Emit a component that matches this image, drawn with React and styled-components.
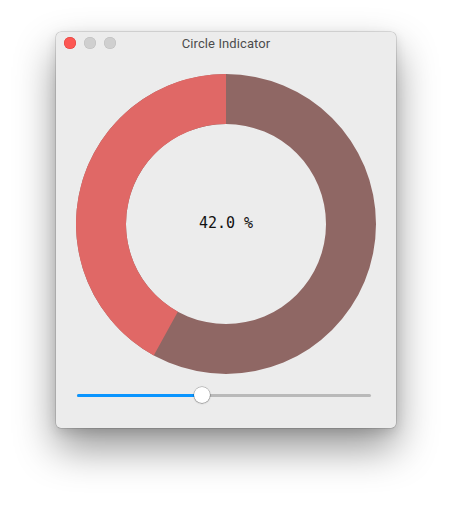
import React, { useState } from "react";
import styled, { createGlobalStyle } from "styled-components";

const Global = createGlobalStyle`
  html, body { margin: 0; padding: 0; background: #ffffff; }
  body { font-family: "Roboto", "Liberation Sans", sans-serif; }
`;

const Page = styled.div`
  width: 452px;
  height: 508px;
  padding: 32px 0 0 56px;
  box-sizing: border-box;
  display: flex;
  align-items: flex-start;
`;

const Window = styled.div`
  width: 340px;
  height: 396px;
  background: #ececec;
  border-radius: 5px;
  box-shadow: 0 0 0 0.5px rgba(0, 0, 0, 0.22), 0 20px 40px rgba(0, 0, 0, 0.42),
    0 4px 12px rgba(0, 0, 0, 0.12);
  display: flex;
  flex-direction: column;
  overflow: hidden;
`;

const TitleBar = styled.div`
  height: 22px;
  flex: none;
  display: grid;
  grid-template-columns: 1fr auto 1fr;
  align-items: center;
  padding: 0 8px;
`;

const Lights = styled.div`
  display: flex;
  gap: 8px;
`;

const Light = styled.span`
  width: 12px;
  height: 12px;
  border-radius: 50%;
  background: ${(p) => p.$color};
  box-shadow: inset 0 0 0 0.5px ${(p) => p.$edge};
`;

const Title = styled.div`
  font-size: 13px;
  color: #4c4c4c;
  letter-spacing: 0.1px;
  padding-top: 1px;
`;

const Content = styled.div`
  flex: 1;
  display: flex;
  flex-direction: column;
  align-items: center;
  padding-top: 20px;
`;

const Gauge = styled.div`
  width: 300px;
  height: 300px;
  position: relative;
  display: flex;
  align-items: center;
  justify-content: center;
`;

const GaugeSvg = styled.svg`
  position: absolute;
  inset: 0;
`;

const Readout = styled.div`
  position: relative;
  font-family: "DejaVu Sans Mono", "Liberation Mono", monospace;
  font-size: 15px;
  color: #111;
  white-space: pre;
  margin-top: -2px;
`;

const SliderRow = styled.div`
  align-self: flex-start;
  margin-left: 21px;
  width: 294px;
  margin-top: 13px;
  height: 16px;
  position: relative;
  display: flex;
  align-items: center;
`;

const Track = styled.div`
  width: 100%;
  height: 3px;
  border-radius: 2px;
  background: #b9b9b9;
  overflow: hidden;
  display: flex;
`;

const Fill = styled.div`
  height: 100%;
  background: #0a95ff;
`;

const Thumb = styled.div`
  position: absolute;
  top: 0;
  width: 16px;
  height: 16px;
  margin-left: -8px;
  border-radius: 50%;
  background: #ffffff;
  box-shadow: 0 0 0 0.5px rgba(0, 0, 0, 0.3), 0 0.5px 1.5px rgba(0, 0, 0, 0.35);
  box-sizing: border-box;
`;

function sectorPath(value) {
  const t = (value / 100) * 2 * Math.PI;
  const R = 150, r = 100, c = 150;
  const ox = c - R * Math.sin(t), oy = c - R * Math.cos(t);
  const ix = c - r * Math.sin(t), iy = c - r * Math.cos(t);
  const large = value > 50 ? 1 : 0;
  return `M${c} ${c - R} A${R} ${R} 0 ${large} 0 ${ox} ${oy} L${ix} ${iy} A${r} ${r} 0 ${large} 1 ${c} ${c - r} Z`;
}

export default function App() {
  const [value] = useState(42);
  const thumbX = 8 + (value / 100) * (294 - 16);
  return (
    <>
      <Global />
      <Page>
        <Window>
          <TitleBar>
            <Lights>
              <Light $color="#fc5753" $edge="#df3d38" />
              <Light $color="#cfcfcf" $edge="#bdbdbd" />
              <Light $color="#cfcfcf" $edge="#bdbdbd" />
            </Lights>
            <Title>Circle Indicator</Title>
            <div />
          </TitleBar>
          <Content>
            <Gauge>
              <GaugeSvg width="300" height="300" viewBox="0 0 300 300">
                <path
                  d="M150 0 A150 150 0 1 1 150 300 A150 150 0 1 1 150 0 Z M150 50 A100 100 0 1 0 150 250 A100 100 0 1 0 150 50 Z"
                  fill="#8f6764"
                  fillRule="evenodd"
                />
                <path d={sectorPath(value)} fill="#e06866" />
              </GaugeSvg>
              <Readout>{value.toFixed(1)} %</Readout>
            </Gauge>
            <SliderRow>
              <Track>
                <Fill style={{ width: `${thumbX}px` }} />
              </Track>
              <Thumb style={{ left: `${thumbX}px` }} />
            </SliderRow>
          </Content>
        </Window>
      </Page>
    </>
  );
}
